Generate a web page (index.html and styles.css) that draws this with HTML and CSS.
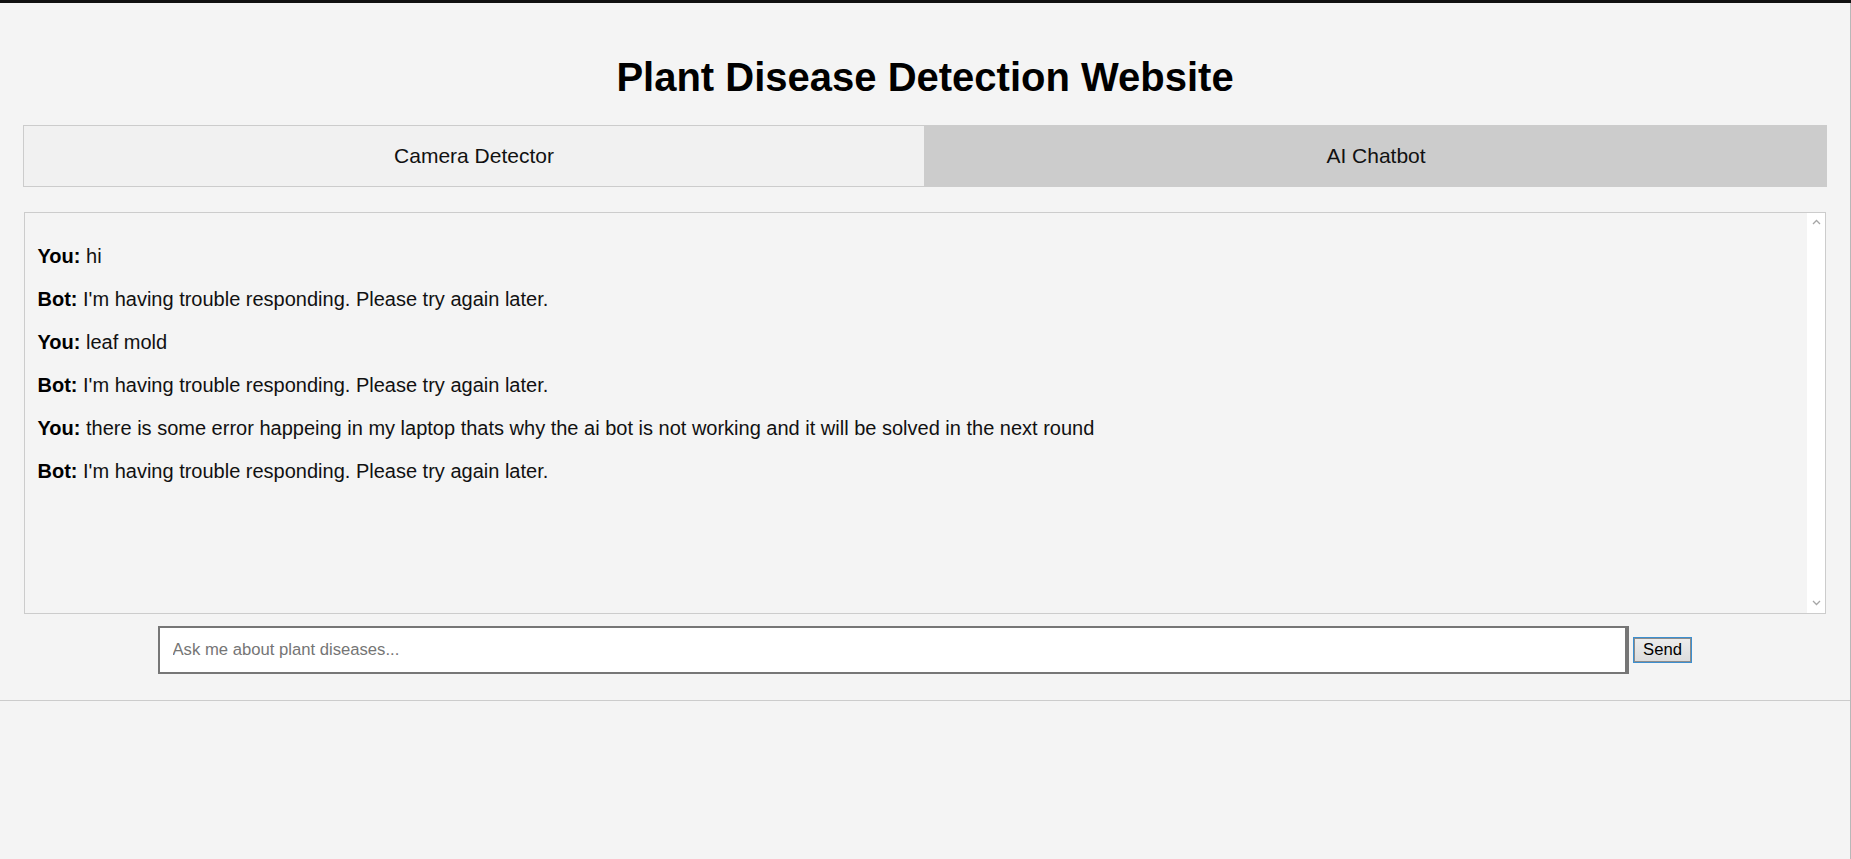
FILE: index.html
```html
<!DOCTYPE html>
<html lang="en">
<head>
<meta charset="utf-8">
<title>Plant Disease Detection Website</title>
<link rel="stylesheet" href="styles.css">
</head>
<body>
<div class="topbar"></div>
<div class="page">
  <main class="main">
    <h1 class="title">Plant Disease Detection Website</h1>
    <nav class="tabs">
      <button class="tab">Camera Detector</button>
      <button class="tab tab-active">AI Chatbot</button>
    </nav>
    <section class="chat">
      <div class="chat-box">
        <div class="messages">
          <p class="msg"><strong>You:</strong> hi</p>
          <p class="msg"><strong>Bot:</strong> I'm having trouble responding. Please try again later.</p>
          <p class="msg"><strong>You:</strong> leaf mold</p>
          <p class="msg"><strong>Bot:</strong> I'm having trouble responding. Please try again later.</p>
          <p class="msg"><strong>You:</strong> there is some error happeing in my laptop thats why the ai bot is not working and it will be solved in the next round</p>
          <p class="msg"><strong>Bot:</strong> I'm having trouble responding. Please try again later.</p>
        </div>
        <div class="scrollbar">
          <svg class="arrow" width="9" height="6" viewBox="0 0 9 6"><path d="M1 5 L4.5 1.5 L8 5" stroke="#a6a6a6" stroke-width="1.3" fill="none"/></svg>
          <svg class="arrow" width="9" height="6" viewBox="0 0 9 6"><path d="M1 1 L4.5 4.5 L8 1" stroke="#a6a6a6" stroke-width="1.3" fill="none"/></svg>
        </div>
      </div>
      <div class="input-row">
        <input class="chat-input" type="text" placeholder="Ask me about plant diseases...">
        <button class="send">Send</button>
      </div>
    </section>
  </main>
</div>
</body>
</html>
```
FILE: styles.css
```css
* { box-sizing: border-box; }

html, body {
  margin: 0;
  padding: 0;
  background: #f4f4f4;
  font-family: "Liberation Sans", Arial, sans-serif;
  color: #111;
}

.topbar {
  height: 3px;
  background: #111;
}

.page {
  height: 856px;
  border-right: 1px solid #b8b8b8;
}

.main {
  padding: 51px 23px 26px 23px;
  border-bottom: 1px solid #cccccc;
}

.title {
  margin: 0 0 25px 0;
  font-size: 40px;
  line-height: 46px;
  font-weight: bold;
  text-align: center;
  color: #000;
}

.tabs {
  display: flex;
}

.tab {
  flex: 1;
  margin: 0;
  padding: 18px 0;
  border: 1px solid #cccccc;
  background: #f1f1f1;
  font-family: "Liberation Sans", Arial, sans-serif;
  font-size: 21px;
  line-height: 24px;
  color: #111;
}

.tab-active {
  background: #cccccc;
}

.chat {
  margin-top: 25px;
}

.chat-box {
  display: flex;
  height: 402px;
  margin: 0 1px;
  border: 1px solid #cccccc;
  background: #f4f4f4;
}

.messages {
  flex: 1;
  padding: 12px 12.5px 0 12.5px;
}

.msg {
  margin: 20px 0;
  font-size: 20px;
  line-height: 23px;
  color: #111;
}

.msg strong {
  color: #000;
}

.scrollbar {
  width: 18px;
  background: #ffffff;
  display: flex;
  flex-direction: column;
  justify-content: space-between;
  align-items: center;
  padding: 6px 0 7px 0;
}

.arrow {
  display: block;
}

.input-row {
  display: flex;
  justify-content: center;
  align-items: center;
  gap: 4px;
  margin-top: 12px;
}

.chat-input {
  width: 1471px;
  height: 48px;
  margin: 0;
  padding: 0 12.5px;
  border: 2px solid #767676;
  border-right-width: 4px;
  background: #ffffff;
  font-family: "Liberation Sans", Arial, sans-serif;
  font-size: 16.67px;
  color: #111;
  outline: none;
}

.chat-input::placeholder {
  color: #757575;
}

.send {
  width: 59px;
  height: 26px;
  margin: 0;
  padding: 0;
  border: 1px solid #3c8fd0;
  box-shadow: inset 0 0 0 1px #8c8c8c;
  background: linear-gradient(#ededed, #dcdcdc);
  font-family: "Liberation Sans", Arial, sans-serif;
  font-size: 16.67px;
  color: #000;
}
```
